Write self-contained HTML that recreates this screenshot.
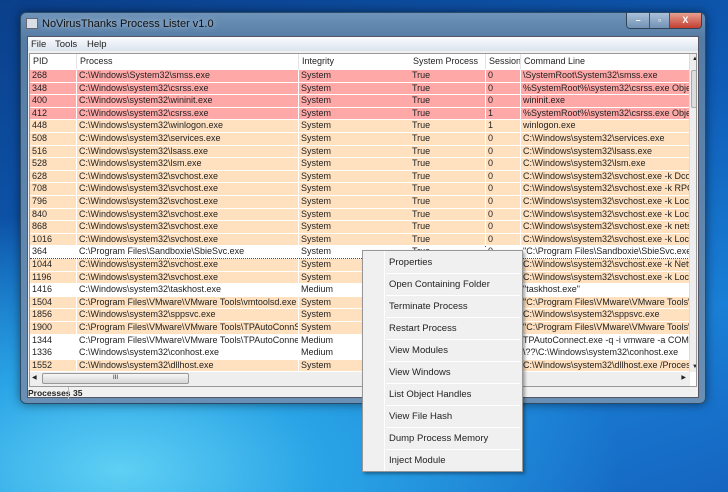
<!DOCTYPE html>
<html><head><meta charset="utf-8"><style>
*{margin:0;padding:0;box-sizing:border-box}
body{width:728px;height:492px;overflow:hidden;position:relative;font-family:"Liberation Sans",sans-serif;font-size:9px;color:#222;
background:radial-gradient(ellipse 500px 260px at 120px 470px,#5fd0f4 0%,#2aa4e6 40%,rgba(20,110,200,0) 100%),linear-gradient(160deg,#0b3f8a 0%,#0e5bb5 45%,#1a7fd6 75%,#1565c0 100%);}
.win{position:absolute;left:20px;top:12px;width:686px;height:392px;border-radius:6px;border:1px solid #2a4a6a;
background:linear-gradient(180deg,#6f93b8 0%,#557ca5 25px,#6a8fb4 100%);box-shadow:0 0 10px rgba(0,0,0,.5)}
.title{position:absolute;left:21px;top:5px;font-size:11px;color:#111;text-shadow:0 0 6px #cde}
.ico{position:absolute;left:5px;top:5px;width:12px;height:11px;background:#d8dfe6;border:1px solid #667}
.btns{position:absolute;left:605px;top:0;width:76px;height:16px;border:1px solid #345;border-top:none;border-radius:0 0 4px 4px;overflow:hidden;display:flex}
.btns div{height:16px;background:linear-gradient(#aac0d8,#6d8fb3);border-right:1px solid #456;color:#fff;font-weight:bold;text-align:center;font-size:9px;line-height:15px}
.client{position:absolute;left:6px;top:23px;width:672px;height:362px;background:#f0f0f0;border:1px solid #556}
.menu{position:absolute;left:0;top:0;width:670px;height:14px;background:linear-gradient(#fafbfd,#dbe3ee);font-size:9.5px}
.menu span{position:absolute;top:2px}
.lv{position:absolute;left:1px;top:16px;width:668px;height:334px;background:#fff;border:1px solid #999;overflow:hidden}
.row{position:absolute;left:0;height:12.6px;width:660px}
.c{position:absolute;top:0;height:11.6px;line-height:11.6px;padding-left:2px;white-space:nowrap;overflow:hidden}
.r .c{background:#ffa8a8}.o .c{background:#ffe1bf}.w .c{background:#fff}
.hd .c{background:#fff;height:15px;line-height:15px;border-right:1px solid #e3e3e3;padding-left:3px}
.vs{position:absolute;left:659px;top:0;width:9px;height:318px;background:#eee;border-left:1px solid #ddd}
.hs{position:absolute;left:0;top:318px;width:660px;height:14px;background:#eee}
.status{position:absolute;left:0;top:350px;width:670px;height:12px;font-size:8.5px}
.cm{position:absolute;left:362px;top:250px;width:161px;height:222px;background:#f0f0f0;border:1px solid #979797;box-shadow:2px 2px 3px rgba(0,0,0,.35)}
.cm .g{position:absolute;left:21px;top:0;width:1px;height:220px;background:#e0e0e0;border-right:1px solid #fff}
.cm div.i{position:absolute;left:26px;font-size:9.5px}
.cm div.s{position:absolute;left:23px;width:134px;height:1px;background:#e0e0e0;border-bottom:1px solid #fff}
</style></head><body>
<div class="win">
<div class="ico"></div><div class="title">NoVirusThanks Process Lister v1.0</div>
<div class="btns"><div style="width:24px">–</div><div style="width:20px">▫</div><div style="width:32px;background:linear-gradient(#e8a090,#c0392b);border:none">X</div></div>
<div class="client">
<div class="menu"><span style="left:3px">File</span><span style="left:27px">Tools</span><span style="left:59px">Help</span></div>
<div class="lv" id="lv">
<div class="vs"><div style="position:absolute;left:1px;top:16px;width:7px;height:38px;background:#dcdcdc;border:1px solid #aaa;border-radius:2px"></div><div style="position:absolute;top:2px;left:2px;font-size:6px">▲</div><div style="position:absolute;bottom:2px;left:2px;font-size:6px">▼</div></div>
<div class="hs"><div style="position:absolute;left:2px;top:2px;font-size:6px">◀</div><div style="position:absolute;left:12px;top:1px;width:147px;height:11px;background:linear-gradient(#f6f6f6,#d6d6d6);border:1px solid #999;border-radius:2px;text-align:center;font-size:6px;line-height:9px">III</div><div style="position:absolute;right:4px;top:2px;font-size:6px">▶</div></div>
</div>
<div class="status"><span style="position:absolute;left:0;top:1px;font-weight:bold">Processes</span><span style="position:absolute;left:40px;top:0;height:12px;border-left:1px solid #bbb"></span><span style="position:absolute;left:45px;top:1px;font-weight:bold">35</span></div>
</div>
</div>
<div class="cm"><div class="g"></div>
<div class="i" style="top:6px">Properties</div><div class="s" style="top:22px"></div>
<div class="i" style="top:28px">Open Containing Folder</div><div class="s" style="top:44px"></div>
<div class="i" style="top:50px">Terminate Process</div><div class="s" style="top:66px"></div>
<div class="i" style="top:72px">Restart Process</div><div class="s" style="top:88px"></div>
<div class="i" style="top:94px">View Modules</div><div class="s" style="top:110px"></div>
<div class="i" style="top:116px">View Windows</div><div class="s" style="top:132px"></div>
<div class="i" style="top:138px">List Object Handles</div><div class="s" style="top:154px"></div>
<div class="i" style="top:160px">View File Hash</div><div class="s" style="top:176px"></div>
<div class="i" style="top:182px">Dump Process Memory</div><div class="s" style="top:198px"></div>
<div class="i" style="top:204px">Inject Module</div>
</div>
<script>
var cols=[[0,46],[47,221],[269,111],[380,75],[456,34],[491,170]];
var S='C:\\Windows\\system32\\';
var rows=[
['r','268','C:\\Windows\\System32\\smss.exe','System','True','0','\\SystemRoot\\System32\\smss.exe'],
['r','348',S+'csrss.exe','System','True','0','%SystemRoot%\\system32\\csrss.exe ObjectDirectory'],
['r','400',S+'wininit.exe','System','True','0','wininit.exe'],
['r','412',S+'csrss.exe','System','True','1','%SystemRoot%\\system32\\csrss.exe ObjectDirectory'],
['o','448',S+'winlogon.exe','System','True','1','winlogon.exe'],
['o','508',S+'services.exe','System','True','0',S+'services.exe'],
['o','516',S+'lsass.exe','System','True','0',S+'lsass.exe'],
['o','528',S+'lsm.exe','System','True','0',S+'lsm.exe'],
['o','628',S+'svchost.exe','System','True','0',S+'svchost.exe -k DcomLaunch'],
['o','708',S+'svchost.exe','System','True','0',S+'svchost.exe -k RPCSS'],
['o','796',S+'svchost.exe','System','True','0',S+'svchost.exe -k LocalService'],
['o','840',S+'svchost.exe','System','True','0',S+'svchost.exe -k LocalSystem'],
['o','868',S+'svchost.exe','System','True','0',S+'svchost.exe -k netsvcs'],
['o','1016',S+'svchost.exe','System','True','0',S+'svchost.exe -k LocalService'],
['w','364','C:\\Program Files\\Sandboxie\\SbieSvc.exe','System','True','0','"C:\\Program Files\\Sandboxie\\SbieSvc.exe"'],
['o','1044',S+'svchost.exe','System','True','0',S+'svchost.exe -k NetworkService'],
['o','1196',S+'svchost.exe','System','True','0',S+'svchost.exe -k LocalService'],
['w','1416',S+'taskhost.exe','Medium','False','1','"taskhost.exe"'],
['o','1504','C:\\Program Files\\VMware\\VMware Tools\\vmtoolsd.exe','System','True','0','"C:\\Program Files\\VMware\\VMware Tools\\vmtoolsd.exe"'],
['o','1856',S+'sppsvc.exe','System','True','0',S+'sppsvc.exe'],
['o','1900','C:\\Program Files\\VMware\\VMware Tools\\TPAutoConnSvc...','System','True','0','"C:\\Program Files\\VMware\\VMware Tools\\TPAuto'],
['w','1344','C:\\Program Files\\VMware\\VMware Tools\\TPAutoConnect....','Medium','False','1','TPAutoConnect.exe -q -i vmware -a COM1 -F'],
['w','1336',S+'conhost.exe','Medium','False','1','\\??\\C:\\Windows\\system32\\conhost.exe'],
['o','1552',S+'dllhost.exe','System','True','0',S+'dllhost.exe /Processid']];
var lv=document.getElementById('lv'),h='<div class="row hd" style="top:0">';
['PID','Process','Integrity','System Process','Session','Command Line'].forEach(function(t,i){h+='<div class="c" style="left:'+cols[i][0]+'px;width:'+(cols[i][1]+1)+'px">'+t+'</div>'});
h+='</div>';
rows.forEach(function(r,k){var top=16+k*12.6;h+='<div class="row '+r[0]+'" style="top:'+top+'px'+(r[1]=='364'?';outline:1px dotted #446;outline-offset:-1px':'')+'">';
for(var i=0;i<6;i++)h+='<div class="c" style="left:'+cols[i][0]+'px;width:'+cols[i][1]+'px">'+r[i+1].replace(/</g,'&lt;')+'</div>';h+='</div>'});
lv.insertAdjacentHTML('afterbegin',h);
</script>
</body></html>
